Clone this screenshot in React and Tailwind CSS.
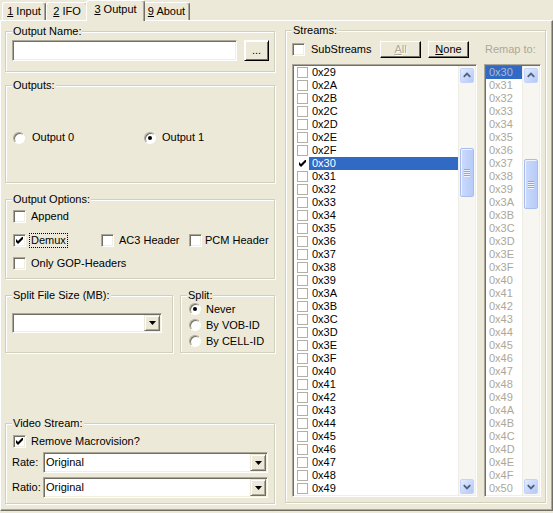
import React from 'react';

const SUNKEN =
  'border border-t-[#ACA899] border-l-[#ACA899] border-r-white border-b-white shadow-[inset_1px_1px_0_#716F64,inset_-1px_-1px_0_#F1EFE2]';

const hex = (n) => '0x' + n.toString(16).toUpperCase();

const streams = Array.from({ length: 33 }, (_, i) => hex(0x29 + i));
const remaps = Array.from({ length: 33 }, (_, i) => hex(0x30 + i));

const Tick = () => (
  <svg width="7" height="7" viewBox="0 0 7 7">
    <polygon points="0,2 2,4 7,-1 7,2 2,7 0,5" fill="#000" />
  </svg>
);

const Check = ({ checked }) => (
  <span className={`inline-flex items-center justify-center w-[13px] h-[13px] shrink-0 bg-white ${SUNKEN}`}>
    {checked && <Tick />}
  </span>
);

const Radio = ({ checked }) => (
  <span className="relative inline-block w-[12px] h-[12px] shrink-0 rounded-full bg-white border border-t-[#ACA899] border-l-[#ACA899] border-r-white border-b-white shadow-[inset_1px_1px_0_#716F64]">
    {checked && <span className="absolute left-[3px] top-[3px] w-[4px] h-[4px] rounded-full bg-black" />}
  </span>
);

const Group = ({ label, className, children }) => (
  <div className={`relative border border-[#D0D0BF] shadow-[inset_1px_1px_0_#fff,1px_1px_0_#fff] ${className}`}>
    <span className="absolute -top-[7px] left-[6px] px-[1px] bg-[#ECE9D8] leading-[13px]">{label}</span>
    {children}
  </div>
);

const Combo = ({ value, className }) => (
  <div className={`flex bg-white ${SUNKEN} ${className}`}>
    <div className="flex-1 flex items-center pl-[2px]">{value}</div>
    <div className="w-[16px] m-[1px] flex items-center justify-center bg-[#ECE9D8] border border-t-[#ECE9D8] border-l-[#ECE9D8] border-r-[#716F64] border-b-[#716F64] shadow-[inset_1px_1px_0_#fff,inset_-1px_-1px_0_#ACA899]">
      <svg width="7" height="4" viewBox="0 0 7 4">
        <path d="M0 0h7L3.5 4z" fill="#000" />
      </svg>
    </div>
  </div>
);

const Btn = ({ children, className, disabled }) => (
  <div
    className={`flex items-center justify-center bg-[#ECE9D8] border border-t-white border-l-white border-r-[#000] border-b-[#000] shadow-[inset_-1px_-1px_0_#716F64] ${
      disabled ? 'text-[#ACA899] [text-shadow:1px_1px_0_#fff]' : 'text-black'
    } ${className}`}
  >
    {children}
  </div>
);

const Arrow = ({ up }) => (
  <div className="h-[15px] rounded-[2px] border border-[#C3D3FD] bg-linear-to-br from-[#E3EBFE] to-[#B4C8F6] flex items-center justify-center shrink-0">
    <svg width="13" height="13" viewBox="0 0 13 13">
      <polyline
        points={up ? '3,8 6.5,4.5 10,8' : '3,5 6.5,8.5 10,5'}
        fill="none"
        stroke="#4D6185"
        strokeWidth="2"
      />
    </svg>
  </div>
);

const ScrollBar = ({ thumbClass }) => (
  <div className="w-[17px] h-full flex flex-col shrink-0 bg-[#F7F6F0] border-l border-[#EEEDE5] px-[1px] pt-[2px] pb-[1px]">
    <Arrow up />
    <div
      className={`rounded-[2px] border border-[#A9BEEC] bg-linear-to-r from-[#CCDAFD] to-[#B6CBF8] flex flex-col items-center justify-center gap-[1px] shadow-[inset_1px_1px_0_#EEF3FE] ${thumbClass}`}
    >
      {[0, 1, 2, 3].map((i) => (
        <span key={i} className="block w-[6px] h-[1px] bg-[#8DA7DC] shadow-[0_1px_0_#EEF4FE]" />
      ))}
    </div>
    <div className="flex-1" />
    <Arrow />
  </div>
);

const Tab = ({ hot, label, className }) => (
  <div className={`flex items-center justify-center bg-[#ECE9D8] border-t border-l border-white border-r border-r-[#716F64] rounded-t-[3px] shadow-[inset_-1px_0_0_#ACA899] ${className}`}>
    <span>
      <u>{hot}</u> {label}
    </span>
  </div>
);

export default function App() {
  return (
    <div className="w-[553px] h-[513px] bg-[#ECE9D8] text-black text-[11px] leading-[13px] font-['Liberation_Sans',Arial,sans-serif] overflow-hidden">
      <div className="flex items-end h-[20px] pl-[2px]">
        <Tab hot="1" label="Input" className="w-[44px] h-[18px] pb-[1px]" />
        <Tab hot="2" label="IFO" className="w-[42px] h-[18px] pb-[1px]" />
        <Tab hot="3" label="Output" className="relative z-10 w-[59px] h-[21px] -mx-[2px] -mb-[1px] pb-[4px]" />
        <Tab hot="9" label="About" className="w-[47px] h-[18px] pb-[1px]" />
      </div>

      <div className="flex w-[553px] h-[491px] border border-t-white border-l-white border-r-[#716F64] border-b-[#716F64] shadow-[inset_-1px_-1px_0_#ACA899]">
        <div className="ml-[4px] w-[270px] flex flex-col">
          <Group label="Output Name:" className="mt-[10px] h-[41px] flex items-start pt-[8px] pl-[6px]">
            <div className={`w-[225px] h-[21px] bg-white ${SUNKEN}`} />
            <Btn className="ml-[7px] w-[25px] h-[21px] border-t-[#000] border-l-[#000] shadow-[inset_1px_1px_0_#fff,inset_-1px_-1px_0_#716F64]">...</Btn>
          </Group>

          <Group label="Outputs:" className="mt-[13px] h-[98px] pt-[45px] pl-[7px]">
            <div className="flex items-center h-[13px]">
              <div className="w-[131px] flex items-center gap-[7px]">
                <Radio />
                <span>Output 0</span>
              </div>
              <div className="flex items-center gap-[6px]">
                <Radio checked />
                <span>Output 1</span>
              </div>
            </div>
          </Group>

          <Group label="Output Options:" className="mt-[16px] h-[80px] pt-[4px] pl-[7px]">
            <div className="h-[24px] flex items-center gap-[5px]">
              <Check />
              <span>Append</span>
            </div>
            <div className="h-[24px] flex items-center">
              <div className="w-[88px] flex items-center">
                <Check checked />
                <span className="ml-[3px] pl-[1px] pr-[1px] border border-dotted border-black leading-[13px]">Demux</span>
              </div>
              <div className="w-[88px] flex items-center gap-[5px]">
                <Check />
                <span>AC3 Header</span>
              </div>
              <div className="flex items-center gap-[3px]">
                <Check />
                <span>PCM Header</span>
              </div>
            </div>
            <div className="h-[23px] flex items-center gap-[5px]">
              <Check />
              <span>Only GOP-Headers</span>
            </div>
          </Group>

          <div className="mt-[16px] flex h-[58px]">
            <Group label="Split File Size (MB):" className="w-[168px] h-full pt-[17px] pl-[6px]">
              <Combo value="" className="w-[150px] h-[20px]" />
            </Group>
            <Group label="Split:" className="ml-[7px] w-[95px] h-full pt-[5px] pl-[8px]">
              {['Never', 'By VOB-ID', 'By CELL-ID'].map((t, i) => (
                <div key={t} className="h-[16px] flex items-center gap-[5px]">
                  <Radio checked={i === 0} />
                  <span>{t}</span>
                </div>
              ))}
            </Group>
          </div>

          <Group label="Video Stream:" className="mt-[70px] h-[81px] pt-[11px] pl-[6px]">
            <div className="h-[13px] flex items-center gap-[5px] pl-[1px]">
              <Check checked />
              <span>Remove Macrovision?</span>
            </div>
            <div className="mt-[4px] flex items-center h-[21px]">
              <span className="w-[31px]">Rate:</span>
              <Combo value="Original" className="w-[225px] h-[21px]" />
            </div>
            <div className="mt-[4px] flex items-center h-[21px]">
              <span className="w-[31px]">Ratio:</span>
              <Combo value="Original" className="w-[225px] h-[21px]" />
            </div>
          </Group>
        </div>

        <Group label="Streams:" className="ml-[10px] mt-[9px] w-[261px] h-[473px] pt-[10px] pl-[6px]">
          <div className="flex items-center h-[17px]">
            <div className="w-[88px] flex items-center gap-[6px]">
              <Check />
              <span>SubStreams</span>
            </div>
            <Btn disabled className="w-[41px] h-[17px]">
              <span>
                <u>A</u>ll
              </span>
            </Btn>
            <Btn className="ml-[7px] w-[41px] h-[17px]">
              <span>
                <u>N</u>one
              </span>
            </Btn>
            <span className="ml-[16px] text-[#ACA899]">Remap to:</span>
          </div>

          <div className="mt-[6px] flex h-[433px]">
            <div className={`w-[185px] h-full flex bg-white ${SUNKEN} p-[1px]`}>
              <div className="flex-1 flex flex-col">
                {streams.map((s) => {
                  const sel = s === '0x30';
                  return (
                    <div key={s} className="h-[13px] flex items-center pl-[3px]">
                      <span
                        className={`w-[11px] h-[11px] shrink-0 flex items-center justify-center bg-white ${
                          sel ? '' : 'border border-[#B2AFA4]'
                        }`}
                      >
                        {sel && <Tick />}
                      </span>
                      <span className={`ml-[1px] flex-1 h-[13px] pl-[3px] ${sel ? 'bg-[#316AC5] text-white' : ''}`}>{s}</span>
                    </div>
                  );
                })}
              </div>
              <ScrollBar thumbClass="mt-[65px] h-[49px]" />
            </div>

            <div className={`ml-[7px] w-[57px] h-full flex bg-white ${SUNKEN} p-[1px]`}>
              <div className="flex-1 flex flex-col text-[#ACA899]">
                {remaps.map((s, i) => (
                  <div key={s} className={`h-[13px] pl-[3px] ${i === 0 ? 'bg-[#316AC5] text-[#B4B8C8]' : ''}`}>
                    {s}
                  </div>
                ))}
              </div>
              <ScrollBar thumbClass="mt-[76px] h-[50px]" />
            </div>
          </div>
        </Group>
      </div>
    </div>
  );
}
